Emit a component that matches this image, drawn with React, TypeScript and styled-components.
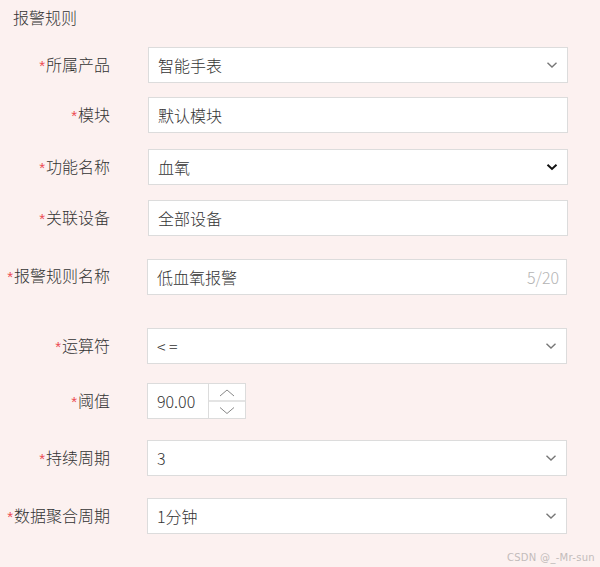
import { createGlobalStyle } from "styled-components";
import styled from "styled-components";

const GlobalStyle = createGlobalStyle`
  html, body {
    margin: 0;
    padding: 0;
    background: #fcf1f0;
  }
  body {
    font-family: "Noto Sans CJK SC", "Noto Sans", sans-serif;
    font-weight: 300;
    color: #333;
  }
`;

const Page = styled.div`
  width: 600px;
  height: 567px;
  background: #fcf1f0;
  position: relative;
  overflow: hidden;
  box-sizing: border-box;
  padding-top: 6px;
`;

const Title = styled.div`
  font-size: 16px;
  line-height: 22px;
  padding-left: 13px;
  color: #333;
`;

const Form = styled.div`
  display: flex;
  flex-direction: column;
`;

const Row = styled.div<{ gap: number; shift?: number }>`
  display: flex;
  align-items: center;
  margin-top: ${(p) => p.gap}px;
  height: 36px;
  padding-left: ${(p) => 147 + (p.shift ?? 0)}px;
  position: relative;
`;

const Label = styled.label<{ lift?: number }>`
  position: absolute;
  right: calc(100% - 110px);
  left: 0;
  text-align: right;
  font-size: 16px;
  line-height: 20px;
  color: #333;
  white-space: nowrap;
  top: 50%;
  transform: translateY(${(p) => -50 - (p.lift ?? 0)}%);
`;

const Star = styled.span`
  color: #ec4a52;
  font-family: "Liberation Sans", sans-serif;
  font-weight: 400;
  font-size: 15px;
  margin-right: 1px;
`;

const Box = styled.div<{ width?: number }>`
  box-sizing: border-box;
  width: ${(p) => p.width ?? 420}px;
  height: 36px;
  background: #fff;
  border: 1px solid #dcdcdc;
  display: flex;
  align-items: center;
  padding: 0 9px 1px 9px;
  font-size: 16px;
  color: #333;
`;

const Value = styled.span`
  flex: 1;
`;

const Counter = styled.span`
  color: #b4b4b4;
  font-size: 16px;
  margin-right: -2px;
`;

const NumberBox = styled.div`
  box-sizing: border-box;
  width: 99px;
  height: 36px;
  display: flex;
  background: #fff;
  border: 1px solid #dcdcdc;
`;

const NumberValue = styled.div`
  width: 61px;
  display: flex;
  align-items: center;
  padding: 0 0 1px 9px;
  font-size: 16px;
  color: #333;
  border-right: 1px solid #dcdcdc;
  box-sizing: border-box;
`;

const Stepper = styled.div`
  flex: 1;
  display: flex;
  flex-direction: column;
`;

const StepButton = styled.div<{ top?: boolean }>`
  flex: 1;
  display: flex;
  align-items: center;
  justify-content: center;
  border-bottom: ${(p) => (p.top ? "2px solid #e4e4e4" : "none")};
`;

const Watermark = styled.div`
  position: absolute;
  right: 5px;
  bottom: 4px;
  font-family: "DejaVu Sans", sans-serif;
  font-weight: 400;
  font-size: 10px;
  color: #c3bcbb;
  letter-spacing: 0.3px;
`;

function Chevron({ dark }: { dark?: boolean }) {
  return (
    <svg width="12" height="8" viewBox="0 0 12 8" style={{ marginTop: 1 }}>
      <path
        d="M1.5 1.8 L6 6 L10.5 1.8"
        fill="none"
        stroke={dark ? "#111" : "#777"}
        strokeWidth={dark ? 2 : 1.4}
      />
    </svg>
  );
}

function Arrow({ up }: { up?: boolean }) {
  return (
    <svg width="18" height="9" viewBox="0 0 18 9">
      <path
        d={up ? "M2 8 L9 2 L16 8" : "M2 1.5 L9 7.5 L16 1.5"}
        fill="none"
        stroke="#888"
        strokeWidth="1"
      />
    </svg>
  );
}

const rows = [
  { label: "所属产品", value: "智能手表", gap: 19, select: true, shift: 1 },
  { label: "模块", value: "默认模块", gap: 14, shift: 1 },
  { label: "功能名称", value: "血氧", gap: 16, select: true, dark: true, shift: 1 },
  { label: "关联设备", value: "全部设备", gap: 15, shift: 1 },
];

export default function App() {
  return (
    <Page>
      <GlobalStyle />
      <Title>报警规则</Title>
      <Form>
        {rows.map((r) => (
          <Row key={r.label} gap={r.gap} shift={r.shift}>
            <Label>
              <Star>*</Star>
              {r.label}
            </Label>
            <Box>
              <Value>{r.value}</Value>
              {r.select && <Chevron dark={r.dark} />}
            </Box>
          </Row>
        ))}
        <Row gap={23}>
          <Label lift={3}>
            <Star>*</Star>报警规则名称
          </Label>
          <Box>
            <Value>低血氧报警</Value>
            <Counter>5/20</Counter>
          </Box>
        </Row>
        <Row gap={33}>
          <Label>
            <Star>*</Star>运算符
          </Label>
          <Box>
            <Value>&lt; =</Value>
            <Chevron />
          </Box>
        </Row>
        <Row gap={19}>
          <Label>
            <Star>*</Star>阈值
          </Label>
          <NumberBox>
            <NumberValue>90.00</NumberValue>
            <Stepper>
              <StepButton top>
                <Arrow up />
              </StepButton>
              <StepButton>
                <Arrow />
              </StepButton>
            </Stepper>
          </NumberBox>
        </Row>
        <Row gap={21}>
          <Label>
            <Star>*</Star>持续周期
          </Label>
          <Box>
            <Value>3</Value>
            <Chevron />
          </Box>
        </Row>
        <Row gap={22}>
          <Label>
            <Star>*</Star>数据聚合周期
          </Label>
          <Box>
            <Value>1分钟</Value>
            <Chevron />
          </Box>
        </Row>
      </Form>
      <Watermark>CSDN @_-Mr-sun</Watermark>
    </Page>
  );
}
